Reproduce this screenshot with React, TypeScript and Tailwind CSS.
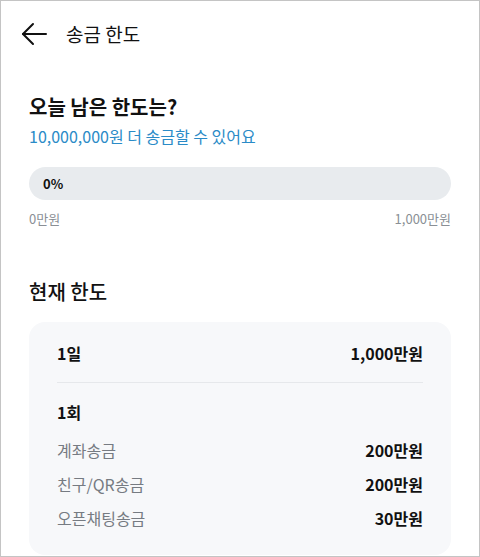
import React from "react";

const font = { fontFamily: '"Noto Sans CJK KR", "Noto Sans", sans-serif' };

function Row({ label, value }: { label: string; value: string }) {
  return (
    <div className="flex items-center justify-between h-[34px]">
      <span className="text-[16px] text-[#767b82]">{label}</span>
      <span className="text-[16px] font-bold text-[#111]">{value}</span>
    </div>
  );
}

export default function App() {
  return (
    <div
      className="w-[480px] h-[557px] bg-white border border-[#c4c4c4] overflow-hidden text-[#111]"
      style={font}
    >
      {/* header */}
      <div className="flex items-center h-[66px] pl-[20px]">
        <svg width="26" height="24" viewBox="0 0 26 24" fill="none" stroke="#111" strokeWidth="2" strokeLinecap="round">
          <path d="M2 12 H25" />
          <path d="M12 2 L2 12 L12 22" strokeLinejoin="round" />
        </svg>
        <span className="ml-[19px] text-[19px] text-[#111]">송금 한도</span>
      </div>

      <div className="px-[28px]">
        <div className="pt-[25px] text-[20px] font-bold leading-[30px]">오늘 남은 한도는?</div>
        <div className="mt-[2px] text-[16px] text-[#2a8bc7] leading-[24px]">10,000,000원 더 송금할 수 있어요</div>

        <div className="mt-[19px] h-[33px] rounded-full bg-[#e8ebee] flex items-center pl-[14px]">
          <span className="text-[13px] font-bold">0%</span>
        </div>
        <div className="mt-[9px] flex justify-between text-[13px] text-[#8a8f95] leading-[20px]">
          <span>0만원</span>
          <span>1,000만원</span>
        </div>

        <div className="mt-[48px] text-[20px] font-medium leading-[30px]">현재 한도</div>

        <div className="mt-[15px] rounded-[16px] bg-[#f7f8fa] px-[28px] pt-[14px] pb-[20px]">
          <div className="flex items-center justify-between h-[34px]">
            <span className="text-[16px] font-bold">1일</span>
            <span className="text-[16px] font-bold">1,000만원</span>
          </div>
          <div className="mt-[12px] border-t border-[#e6e8eb]" />
          <div className="mt-[12px] h-[34px] flex items-center text-[16px] font-bold">1회</div>
          <div className="mt-[4px]">
            <Row label="계좌송금" value="200만원" />
            <Row label="친구/QR송금" value="200만원" />
            <Row label="오픈채팅송금" value="30만원" />
          </div>
        </div>
      </div>
    </div>
  );
}
